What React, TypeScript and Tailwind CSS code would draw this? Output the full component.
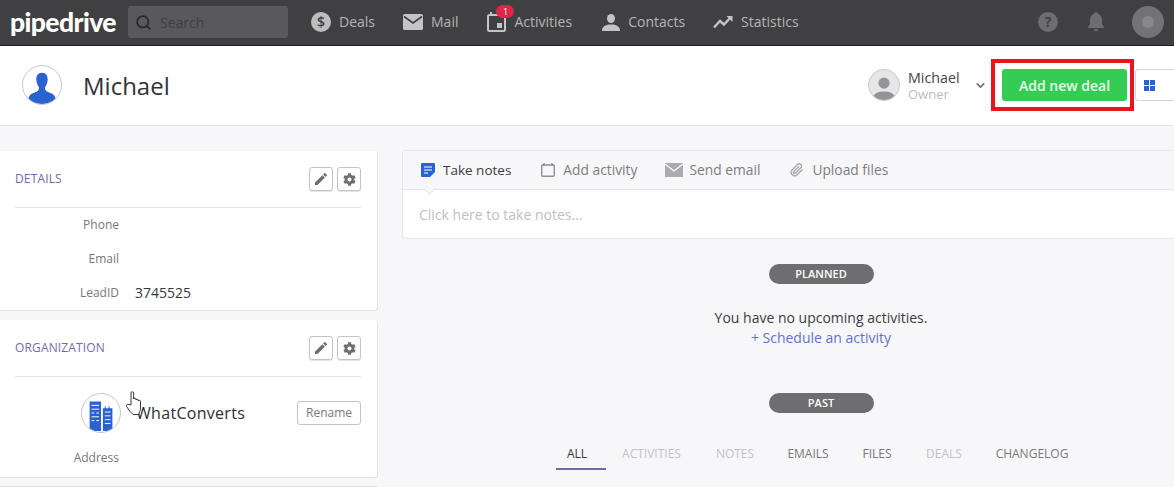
import { ChevronDown, Search } from "lucide-react";
import { FaCog } from "react-icons/fa";
import { MdEdit } from "react-icons/md";

const sans = "font-['Open_Sans','Noto_Sans',sans-serif]";

function NavItem({ icon, label, className }: { icon: React.ReactNode; label: string; className: string }) {
  return (
    <div className={`flex items-center ${className}`}>
      {icon}
      <span className="ml-2 text-[14px] leading-none text-[#b5b5b7]">{label}</span>
    </div>
  );
}

function IconButton({ children }: { children: React.ReactNode }) {
  return (
    <div className="flex size-6 items-center justify-center rounded-[3px] border border-[#c4c4c6] bg-white text-[#6e6e70] shadow-[0_1px_0_#e5e5e5]">
      {children}
    </div>
  );
}

function CardHeader({ title }: { title: string }) {
  return (
    <div className="mr-4 ml-[15px] flex h-[57px] items-center justify-between border-b border-[#e4e4e8]">
      <span className="text-[12px] tracking-[0.15px] text-[#7a67a8]">{title}</span>
      <div className="flex gap-1">
        <IconButton>
          <MdEdit className="size-4" />
        </IconButton>
        <IconButton>
          <FaCog className="size-[13px]" />
        </IconButton>
      </div>
    </div>
  );
}

function Field({ label, value, className }: { label: string; value?: string; className: string }) {
  return (
    <div className={`flex items-center ${className}`}>
      <span className="w-[119px] text-right text-[12px] text-[#77777a]">{label}</span>
      {value && <span className="mb-[2px] ml-4 text-[14px] text-[#38383b]">{value}</span>}
    </div>
  );
}

function Tab({ icon, label, active, className }: { icon: React.ReactNode; label: string; active?: boolean; className: string }) {
  return (
    <div className={`flex items-center ${className}`}>
      {icon}
      <span className={active ? "text-[13.5px] text-[#3c3c40]" : "text-[13.8px] text-[#7d7d80]"}>{label}</span>
    </div>
  );
}

function Pill({ label }: { label: string }) {
  return (
    <div className="flex h-5 w-[105px] items-center justify-center rounded-full bg-[#6e6e70] text-[11px] font-semibold text-white">
      {label}
    </div>
  );
}

export default function App() {
  const filterTabs = [
    { label: "ALL", color: "text-[#38383b]", w: "w-[50px]" },
    { label: "ACTIVITIES", color: "text-[#c2c2c5]", w: "w-[91px]" },
    { label: "NOTES", color: "text-[#c2c2c5]", w: "w-[76px]" },
    { label: "EMAILS", color: "text-[#77777a]", w: "w-[70px]" },
    { label: "FILES", color: "text-[#77777a]", w: "w-[68px]" },
    { label: "DEALS", color: "text-[#c2c2c5]", w: "w-[66px]" },
    { label: "CHANGELOG", color: "text-[#77777a]", w: "w-[110px]" },
  ];

  return (
    <div className={`h-[487px] w-[1174px] overflow-hidden bg-[#f7f7fa] ${sans}`}>
      {/* top nav */}
      <div className="flex h-[46px] items-center border-b border-[#1d1d1f] bg-[#403f42] pb-[1px]">
        <span className="ml-[10px] w-[118px] font-['Lato',sans-serif] text-[26.500px] leading-none font-black tracking-[-0.6px] text-white">
          pipedrive
        </span>
        <div className="flex h-8 w-40 items-center rounded-[3px] bg-[#59585b] pl-[7px]">
          <Search className="size-[17px] text-[#29292b]" strokeWidth={2.5} />
          <span className="ml-[8px] text-[14px] text-[#403f42]">Search</span>
        </div>
        <NavItem
          className="ml-[23px]"
          label="Deals"
          icon={
            <svg viewBox="0 0 20 20" className="size-5">
              <circle cx="10" cy="10" r="10" fill="#bdbdbf" />
              <text x="10" y="15" textAnchor="middle" fontSize="14" fontWeight="600" fill="#403f42" fontFamily="Open Sans">$</text>
            </svg>
          }
        />
        <NavItem
          className="ml-[28px]"
          label="Mail"
          icon={
            <svg viewBox="0 0 20 16" className="h-4 w-5">
              <rect width="20" height="16" rx="1.5" fill="#c4c4c6" />
              <path d="M1 2.5 L10 9 L19 2.5" fill="none" stroke="#403f42" strokeWidth="1.6" />
            </svg>
          }
        />
        <div className="relative ml-[29px]">
          <NavItem
            className=""
            label="Activities"
            icon={
              <svg viewBox="0 0 19 20" className="h-5 w-[19px]">
                <path d="M3 0h2v3H3zM14 0h2v3h-2z" fill="#c4c4c6" />
                <rect x="1" y="3" width="17" height="16" rx="1.5" fill="none" stroke="#c4c4c6" strokeWidth="2" />
                <rect x="10" y="11" width="5" height="5" fill="#c4c4c6" />
              </svg>
            }
          />
          <span className="absolute top-[-7px] left-[9px] flex h-[13px] w-[18px] items-center justify-center rounded-full bg-[#e0264a] text-[9px] leading-none text-white">
            1
          </span>
        </div>
        <NavItem
          className="ml-[30px]"
          label="Contacts"
          icon={
            <svg viewBox="0 0 18 17" className="h-[17px] w-[18px]">
              <ellipse cx="9" cy="4.5" rx="4" ry="4.5" fill="#c4c4c6" />
              <path d="M0 17 C0 12 4 10.5 9 10.5 S18 12 18 17 Z" fill="#c4c4c6" />
            </svg>
          }
        />
        <NavItem
          className="ml-[28px]"
          label="Statistics"
          icon={
            <svg viewBox="0 0 20 14" className="h-[14px] w-5">
              <path d="M1 12.5 L7 6 L11 9.5 L18 2" fill="none" stroke="#c4c4c6" strokeWidth="2.4" />
              <path d="M13.5 1 H19.5 V7 Z" fill="#c4c4c6" />
            </svg>
          }
        />
        <div className="ml-auto flex items-center">
          <svg viewBox="0 0 20 20" className="size-5">
            <circle cx="10" cy="10" r="10" fill="#6d6c6f" />
            <text x="10" y="15" textAnchor="middle" fontSize="14" fontWeight="700" fill="#403f42" fontFamily="Open Sans">?</text>
          </svg>
          <svg viewBox="0 0 18 20" className="ml-[29px] h-5 w-[18px]">
            <path d="M9 0 a1.5 1.5 0 0 1 1.5 1.6 C13.5 2.4 15 5 15 8 V12 L17.5 16 H0.5 L3 12 V8 C3 5 4.500 2.400 7.500 1.600 A1.500 1.500 0 0 1 9 0 Z M6.800 17 H11.200 A2.200 2.200 0 0 1 6.800 17 Z" fill="#6d6c6f" />
          </svg>
          <div className="mr-[10px] ml-[27px] flex size-8 items-center justify-center rounded-full bg-[#737275]">
            <div className="size-3 rounded-full bg-[#88878a]" />
          </div>
        </div>
      </div>

      {/* person header */}
      <div className="flex h-[80px] items-center border-b border-[#e3e3e6] bg-white pb-[1px]">
        <div className="relative ml-[22px] size-10 overflow-hidden rounded-full border border-[#c8c8cb] bg-white">
          <svg viewBox="0 0 40 40" className="size-full">
            <path d="M20 7 C24.500 7 26 10.500 26 14 C26 18 24 21 23 23 C23 26 25 27 29 28.500 C33 30 35 33 35 40 H5 C5 33 7 30 11 28.500 C15 27 17 26 17 23 C16 21 14 18 14 14 C14 10.500 15.500 7 20 7 Z" fill="#2a62cf" />
          </svg>
        </div>
        <span className="mt-[2px] ml-[21px] text-[24px] leading-none text-[#333336]">Michael</span>
        <div className="ml-auto flex size-8 items-center justify-center overflow-hidden rounded-full border border-[#c8c8cb] bg-[#e6e6e8]">
          <svg viewBox="0 0 32 32" className="size-full">
            <circle cx="16" cy="14" r="6" fill="#949497" />
            <path d="M3 32 C5 24 10 23 16 23 S27 24 29 32 Z" fill="#949497" />
          </svg>
        </div>
        <div className="ml-2 flex w-[66px] flex-col">
          <span className="text-[14.3px] leading-[17px] text-[#46464a]">Michael</span>
          <span className="text-[13px] leading-[16px] text-[#bdbdc0]">Owner</span>
        </div>
        <ChevronDown className="size-[13px] text-[#6e6e70]" strokeWidth={3} />
        {/* annotation box round the button */}
        <div className="ml-1 flex h-[52px] w-[143px] items-center border-[4px] border-[#e9141f] bg-white pl-[7px]">
          <div className="flex h-8 w-[125px] items-center justify-center rounded-[3px] bg-[#35cc55] text-[14px] font-semibold text-[#eafbe9]">
            Add new deal
          </div>
        </div>
        <div className="ml-[1px] flex h-8 w-[39px] items-center rounded-l-[3px] border-y border-l border-[#d5d5d8] bg-white pl-[8px]">
          <div className="grid size-[11px] grid-cols-2 gap-px">
            <div className="bg-[#2a62cf]" />
            <div className="bg-[#2a62cf]" />
            <div className="bg-[#2a62cf]" />
            <div className="bg-[#2a62cf]" />
          </div>
        </div>
      </div>

      <div className="flex">
        {/* left column */}
        <div className="w-[378px] shrink-0 pt-[25px]">
          <div className="h-[160px] rounded-r-[3px] border-r border-b border-[#e3e3e6] bg-white">
            <CardHeader title="DETAILS" />
            <Field className="mt-[7px] h-[20px]" label="Phone" />
            <Field className="mt-[14px] h-[20px]" label="Email" />
            <Field className="mt-[14px] h-[20px]" label="LeadID" value="3745525" />
          </div>
          <div className="mt-[9px] h-[158px] rounded-r-[3px] border-r border-b border-[#e3e3e6] bg-white">
            <CardHeader title="ORGANIZATION" />
            <div className="relative mt-4 ml-[81px] flex h-10 w-[280px] items-center">
              <div className="flex size-10 items-center justify-center overflow-hidden rounded-full border border-[#c8c8cb]">
                <svg viewBox="0 0 40 40" className="size-full">
                  <path d="M8 8 H20 V39 H8 Z M22 15 H24 V13 H25 V15 H28 V13 H29 V15 H32 V39 H22 Z" fill="#2a62cf" />
                  <path d="M10 12h8M10 16h8M10 20h3M15 20h3M10 24h8M10 28h3M15 28h3M24 19h6M24 23h6M24 27h6M24 31h6" stroke="#fff" strokeWidth="1" />
                </svg>
              </div>
              <span className="ml-[15px] text-[16px] font-medium tracking-[0.3px] text-[#2e2e31]">WhatConverts</span>
              <div className="ml-auto flex h-6 w-16 items-center justify-center rounded-[3px] border border-[#c4c4c6] text-[12px] text-[#77777a]">
                Rename
              </div>
              {/* hand cursor caught in the recording */}
              <svg viewBox="0 0 17 24" className="absolute top-[-2px] left-[45px] h-6 w-[17px]">
                <path
                  d="M5 14 V1.800 C5 0.400 7.600 0.400 7.600 1.800 V8 C7.600 6.800 10 6.800 10 8 V9 C10 8 12.200 8 12.200 9 V10 C12.200 9 14.500 9 14.500 10.200 V17 C14.500 19.500 13.500 21 12.500 23.500 H7 C5 21.500 2.500 19 0.700 15.500 C0 14 1.600 12.500 3 13.500 Z"
                  fill="#fff"
                  stroke="#222"
                  strokeWidth="0.9"
                />
              </svg>
            </div>
            <Field className="mt-[15px] h-[20px]" label="Address" />
          </div>
          <div className="mt-[8px] h-2 border-t border-r border-[#e3e3e6] bg-white" />
        </div>

        {/* right column */}
        <div className="ml-6 min-w-0 flex-1 pt-6">
          <div className="h-[89px] rounded-l-[3px] border-y border-l border-[#e6e6e9] bg-white">
            <div className="relative flex h-[39px] items-center border-b border-[#e6e6e9] bg-[#f7f7fa]">
              <Tab
                className="ml-[18px]"
                active
                label="Take notes"
                icon={
                  <svg viewBox="0 0 14 14" className="mr-[8px] size-[14px]">
                    <path d="M1 0 H13 A1 1 0 0 1 14 1 V9 L9 14 H1 A1 1 0 0 1 0 13 V1 A1 1 0 0 1 1 0 Z" fill="#2a62cf" />
                    <path d="M3 4h8M3 7h8M3 10h4" stroke="#fff" strokeWidth="1.100" />
                  </svg>
                }
              />
              <Tab
                className="ml-[30px]"
                label="Add activity"
                icon={
                  <svg viewBox="0 0 14 14" className="mr-[8px] size-[14px]">
                    <path d="M3 0v3M11 0v3" stroke="#919194" strokeWidth="1.500" />
                    <rect x="0.700" y="2" width="12.600" height="11.300" rx="1" fill="none" stroke="#919194" strokeWidth="1.400" />
                  </svg>
                }
              />
              <Tab
                className="ml-[28px]"
                label="Send email"
                icon={
                  <svg viewBox="0 0 18 14" className="mr-[6px] h-[14px] w-[18px]">
                    <rect width="18" height="14" fill="#acacaf" />
                    <path d="M0 1 L9 8 L18 1" fill="none" stroke="#fff" strokeWidth="1.100" />
                  </svg>
                }
              />
              <Tab
                className="ml-[30px]"
                label="Upload files"
                icon={
                  <svg viewBox="0 0 24 24" className="mr-[8px] size-[14px]" fill="none" stroke="#a8a8ab" strokeWidth="2.400">
                    <path d="M21.400 11.050 12.200 20.250a6 6 0 0 1-8.480-8.480l9.190-9.190a4 4 0 0 1 5.660 5.660l-9.200 9.190a2 2 0 0 1-2.830-2.830l8.490-8.480" />
                  </svg>
                }
              />
              {/* little notch under the active tab */}
              <div className="absolute top-[33px] left-[22px] size-[9px] rotate-45 border-r border-b border-[#e6e6e9] bg-[#f7f7fa]" />
            </div>
            <div className="flex h-[47px] items-center pt-[1px] pl-4 text-[14px] text-[#c0c0c3]">Click here to take notes...</div>
          </div>

          <div className="flex w-[838px] flex-col items-center">
            <div className="mt-[25px]">
              <Pill label="PLANNED" />
            </div>
            <span className="mt-[24px] text-[14px] leading-[20px] text-[#3c3c40]">You have no upcoming activities.</span>
            <span className="text-[14px] leading-[20px] text-[#5f73c9]">+ Schedule an activity</span>
            <div className="mt-[45px]">
              <Pill label="PAST" />
            </div>
          </div>

          <div className="mt-[30px] ml-[154px] flex">
            {filterTabs.map((t, i) => (
              <div key={t.label} className={`h-[46px] shrink-0 ${t.w}`}>
                <div
                  className={`flex h-[27px] w-full text-[12px] leading-[22px] ${t.color} ${
                    i === 0 ? "justify-start border-b-2 border-[#7a67a8] pl-[11px]" : "justify-center"
                  }`}
                >
                  {t.label}
                </div>
              </div>
            ))}
          </div>
        </div>
      </div>
    </div>
  );
}
